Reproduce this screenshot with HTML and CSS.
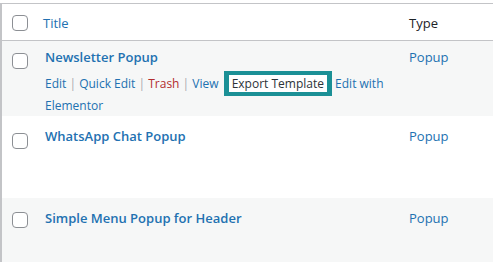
FILE: index.html
```html
<!DOCTYPE html>
<html lang="en">
<head>
    <meta charset="UTF-8">
    <title>Templates</title>
    <link rel="stylesheet" href="styles.css">
</head>
<body>
    <table class="list">
        <thead>
            <tr class="head">
                <td class="check"><span class="box"></span></td>
                <th class="title"><a href="#">Title</a></th>
                <th class="type">Type</th>
            </tr>
        </thead>
        <tbody>
            <tr class="row alt first">
                <td class="check"><span class="box"></span></td>
                <td class="title">
                    <a class="row-title" href="#">Newsletter Popup</a>
                    <div class="row-actions">
                        <a href="#">Edit</a><span class="sep"> | </span><a href="#">Quick&nbsp;Edit</a><span class="sep"> | </span><a class="trash" href="#">Trash</a><span class="sep"> | </span><a href="#">View</a>
                        <span class="export">Export&nbsp;Template</span> <a href="#">Edit&nbsp;with</a> <a href="#">Elementor</a>
                    </div>
                </td>
                <td class="type"><a href="#">Popup</a></td>
            </tr>
            <tr class="row second">
                <td class="check"><span class="box"></span></td>
                <td class="title"><a class="row-title" href="#">WhatsApp Chat Popup</a></td>
                <td class="type"><a href="#">Popup</a></td>
            </tr>
            <tr class="row alt third">
                <td class="check"><span class="box"></span></td>
                <td class="title"><a class="row-title" href="#">Simple Menu Popup for Header</a></td>
                <td class="type"><a href="#">Popup</a></td>
            </tr>
        </tbody>
    </table>
</body>
</html>
```

FILE: styles.css
```css
body {
    margin: 3px 0 0 0;
    background: #fff;
    font-family: 'Open Sans', sans-serif;
    font-size: 13px;
    color: #1d2327;
    overflow: hidden;
}

a {
    color: #2271b1;
    text-decoration: none;
}

.list {
    width: 530px;
    border-collapse: collapse;
    border: 1px solid #c3c4c7;
    border-left-width: 2px;
    table-layout: fixed;
}

.list td,
.list th {
    vertical-align: top;
    text-align: left;
    font-weight: 400;
    line-height: 20px;
    padding: 0;
}

.head {
    height: 37px;
    border-bottom: 1px solid #c3c4c7;
}

.head th,
.head td {
    padding-top: 9px;
}

.head .check {
    padding-top: 11px;
}

.check {
    width: 33px;
}

.box {
    display: block;
    width: 14px;
    height: 14px;
    margin-left: 10px;
    border: 1px solid #8c8f94;
    border-radius: 4px;
    background: #fff;
}

.list th.title {
    width: 358px;
    padding-left: 8px;
}

.list td.title {
    padding-left: 10px;
}

.list .type {
    padding-left: 8px;
}

.row.alt {
    background: #f6f7f7;
}

.first {
    height: 75px;
}

.second {
    height: 82px;
}

.third {
    height: 70px;
}

.first td {
    padding-top: 6px;
}

.first .check {
    padding-top: 12px;
}

.second td,
.third td {
    padding-top: 10px;
}

.second .check {
    padding-top: 17px;
}

.third .check {
    padding-top: 14px;
}

.row-title {
    font-weight: 600;
    font-size: 13px;
}

.row-actions {
    margin-top: 4px;
    font-size: 12px;
}

.sep {
    color: #a7aaad;
}

.trash {
    color: #b32d2e;
}

.export {
    display: inline-block;
    line-height: 17px;
    padding: 0 3px;
    margin-left: 2px;
    background: #fff;
    color: #2c3338;
    border: 5px solid #1b9096;
    border-top-width: 4px;
    border-bottom-width: 4px;
}
```
